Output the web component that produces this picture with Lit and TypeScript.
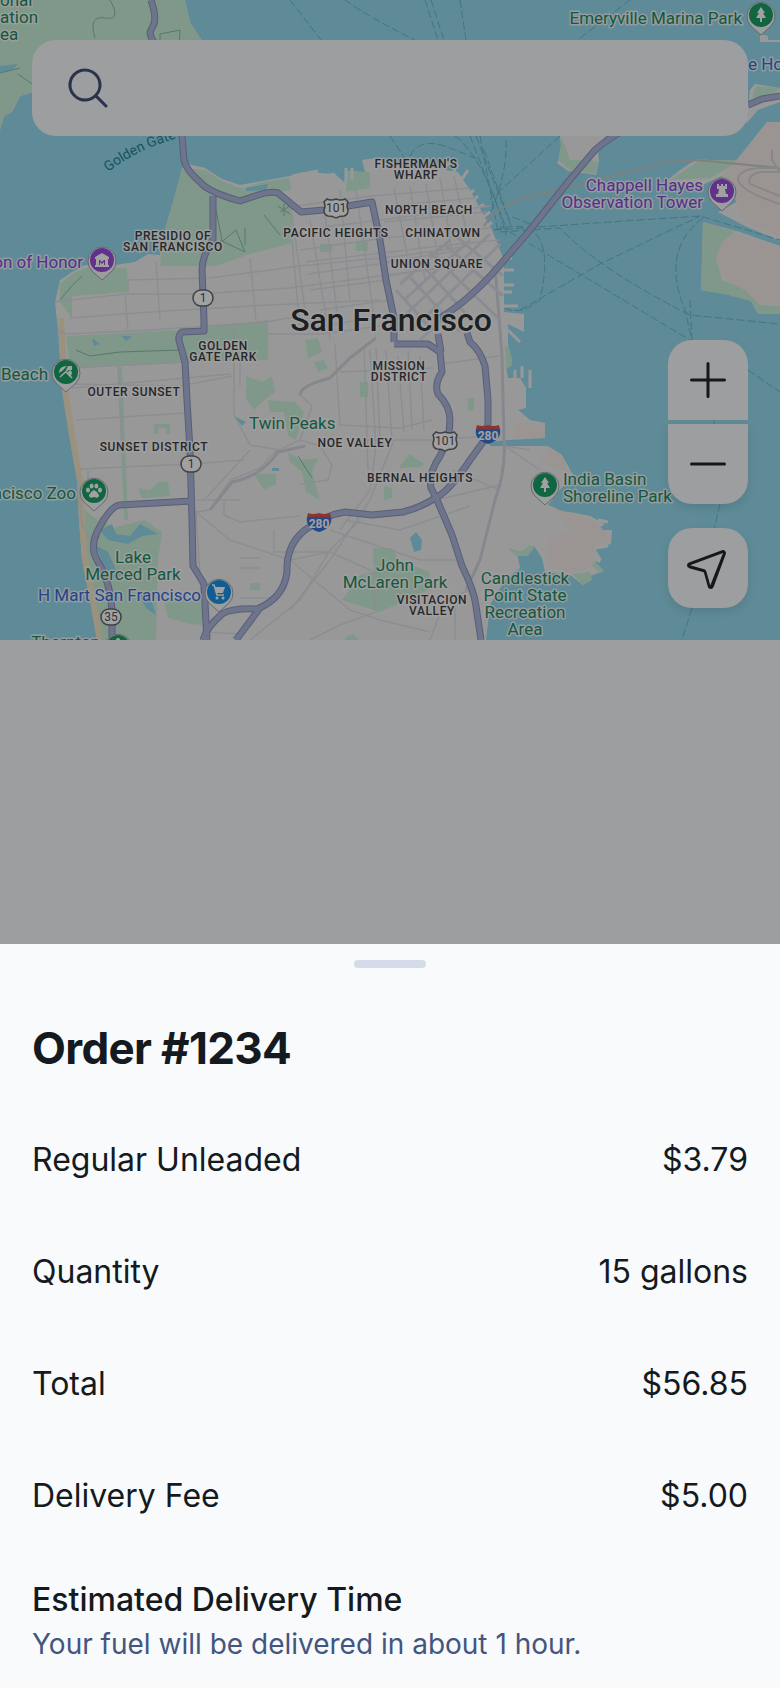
import { LitElement, html, svg, css } from "lit";
import { customElement, state } from "lit/decorators.js";

type Anchor = "start" | "middle" | "end";
type Label = { kind: string; x: number; y: number; anchor: Anchor; lines: string[] };
type PinIcon = "tree" | "tower" | "museum" | "umbrella" | "paw" | "cart" | "none";
type Pin = { x: number; y: number; tone: string; icon: PinIcon };

const LAND = [
  "M0 0H185L190 22L204 44L160 90L60 80L30 93L20 96L12 112L4 116L0 130Z",
  "M182 168L188 164L205 168L222 179L240 185L262 181L290 176L305 172L335 174L344 182L347 171L365 172L362 160L375 158L390 166L425 166L446 170L458 172L470 190L483 214L492 230L500 250L504 260V312L524 314V332L508 324L508 345L512 360L506 366L508 378L520 378L526 388V408L518 410L530 420L545 423V438L508 440L490 442L490 446L548 446L562 455L573 475L560 490L548 505L556 508L562 514L570 512L590 516L605 524L596 530L612 530L611 544L595 548L602 560L595 562L604 571L590 576L583 585L570 575L545 572L542 558L534 546L520 552L508 548L518 557L520 568L505 580L490 605L486 640H97L90 600L82 560L79 520L77 480L70 440L62 390L58 330L55 302L60 280L72 272L85 265L115 265L135 262L148 254L160 255L163 236L170 212L178 190Z",
  "M560 136L562 153L557 163L568 171L596 175L599 160L597 145L606 136Z",
  "M767 122H780V241L745 226L718 212L740 200L722 176L700 186L665 182L680 170L697 159L735 162Z",
  "M703 222L740 232L780 246V314H758L751 301L725 294L701 290Z",
  "M748 110L750 90L755 84L780 88V102L758 110L746 124Z",
  "M760 34L768 36V40H780V42H760Z",
];

const SHORE_TAN = [
  "M735 234Q718 240 717 256Q718 280 745 290L758 303H780V246Z",
  "M767 122H780V236L745 222L738 205L722 176L735 162Z",
  "M552 508L575 514L590 518L606 532L610 542L594 546L598 560L585 570L570 572L550 568L546 556L550 540L572 530Z",
  "M515 422L545 424V438L515 438Z",
  "M549 448L562 456L570 474L556 468L540 462Z",
];

const PARKS = [
  "M0 0H185L190 22L204 44L160 90L60 80L30 93L20 96L12 112L4 116L0 130Z",
  "M182 168L205 170L222 181L240 188L275 190L292 202V243L250 254L216 266H160L163 236L170 212Z",
  "M262 182L290 178L291 190L278 192L245 188Z",
  "M347 172L370 172L370 188L346 192Z",
  "M60 284L72 274L85 268L127 268L128 292L72 296V318L60 302Z",
  "M66 336L180 330L268 320L268 360L185 362L70 368Z",
  "M246 376L262 382L272 376L275 392L262 402L254 410L246 398Z",
  "M268 400L295 402L304 412L296 440L288 436L284 412L270 412Z",
  "M288 452L300 460L318 458L312 472L320 500L306 492L302 472L290 462Z",
  "M305 340L318 338L322 352L308 358Z",
  "M314 362L324 360L328 368L318 372Z",
  "M138 488L150 490L158 482H168L170 496L142 498Z",
  "M254 474L276 474L276 484L264 490Z",
  "M82 508L98 520L92 545L112 590L122 640H98L90 600L84 560Z",
  "M100 515L112 528L145 520L162 532L158 560L156 640H118L100 570L92 545Z",
  "M164 600L200 600L205 625L190 624L168 618Z",
  "M373 548L392 548L398 560L430 572L428 590L380 612L342 600L360 575L374 572Z",
  "M400 466L410 454L424 464L420 467L400 468Z",
  "M384 486L392 488V498L384 500Z",
  "M348 636L354 634L358 640H344Z",
  "M562 138L558 160L570 170L595 174L598 162L590 160L570 160Z",
  "M703 222L735 232L722 242L716 258L722 280L745 290L760 305L780 306V314H758L751 301L725 294L701 290Z",
  "M700 160L737 160L728 168L710 178L670 180Z",
  "M756 86L780 88L770 96L752 98Z",
  "M508 548L520 552L530 545L534 548L528 556L516 556Z",
  "M118 367H122L128 520H124Z",
  "M154 424H170V434H166V428H158V434H154Z",
  "M320 244H332V252H320Z",
  "M356 242H368V251H356Z",
  "M468 398H474V411H468Z",
  "M360 382H368V397H360Z",
  "M250 583H260V590H250Z",
  "M505 345L510 350L512 365L506 370Z",
  "M572 574L590 572L592 580L583 585Z",
  "M594 562L604 570L600 573L592 566Z",
];

const PONDS = [
  "M100 530L112 524L116 534L130 536L140 524L158 534L142 536L128 544L108 540Z",
  "M95 545L108 552L116 570L126 575L112 578L104 565Z",
  "M136 590L150 596L156 615L146 608Z",
  "M410 538L416 532L422 540L421 550L414 552Z",
  "M92 338L100 344L94 346Z",
  "M122 336L132 336L126 341Z",
  "M246 188L268 184L266 190L246 191Z",
  "M272 468H279V471H272Z",
  "M234 416L246 422L242 426Z",
  "M0 66L18 64L12 70L0 72Z",
];

const STREETS = [
  "M55 302L72 300L125 294L200 294L290 288L380 276L480 262",
  "M70 318L150 312L250 306L380 300",
  "M128 292V280L210 278L300 266L400 256L470 246",
  "M156 262L160 320 M125 294L128 330 M250 258L256 320 M292 240L300 330L360 320",
  "M340 190L350 300 M325 214L338 320 M310 220L330 340 M292 214L305 310 M356 190L376 330",
  "M296 206L372 196L470 188 M300 230L380 220L490 206 M300 250L384 238L490 228",
  "M306 262L440 246L500 240 M308 274L420 258 M310 290L386 280 M320 310L390 300",
  "M394 188L410 270 M410 186L425 280 M426 184L440 270 M440 178L452 250 M454 176L468 238",
  "M386 206L476 198 M384 222L486 212 M386 262L462 250 M388 276L450 266",
  "M58 330L66 334L150 330L266 322L300 316 M70 368L190 362L240 356",
  "M70 384L180 386L232 376 M72 388L230 374 M76 420L185 413 M80 469L190 464L244 460",
  "M118 367L122 450 M234 328V415L250 445 M240 350V386 M268 334L320 334L380 326",
  "M300 395L312 406L300 440L275 452L260 468L230 480L210 510",
  "M210 510L196 512L204 640 M196 500L240 500 M204 500L230 472L250 450",
  "M335 344L340 425L400 428L432 420 M364 345L368 470 M376 348L380 440",
  "M386 350L392 440 M398 356L404 432 M408 350L412 430 M420 356L424 430",
  "M340 372L434 368 M360 440L430 440L490 436",
  "M370 350L376 446L370 490L340 530 M394 440L370 500L330 560L290 610",
  "M440 364L500 356 M508 448L540 470 M504 446L530 450 M452 470L500 490 M436 500L500 485",
  "M345 520L400 530L470 506 M330 530L420 560L460 560",
  "M196 512L230 540L290 560L330 552L370 570L400 595",
  "M224 500L224 515L240 522L300 516 M274 530V552H330 M290 560L350 610L380 620L430 632",
  "M240 558H260 M240 568H260 M240 598H280 M207 632L240 634 M250 640L300 600L330 550L360 520",
  "M374 590L376 612L340 625L310 640 M430 640L445 600L470 590 M455 600V640",
  "M300 440L320 446L332 465L328 480L300 484 M250 445L280 450",
  "M78 480L82 525L94 545 M88 470V482",
];

const AVENUES = [
  "M495 266L502 356L504 440Q506 470 495 500L480 560L466 590",
  "M300 395Q300 386 330 378L350 358L376 338",
  "M210 510L232 482Q262 476 278 452L305 446",
];

const BAY_GRID = [
  "M412 330L500 244 M400 320L490 234 M420 340L503 262 M404 300L470 240 M400 284L450 240",
  "M430 252L500 320 M444 244L503 296 M420 262L480 330 M408 275L460 332 M456 236L503 276 M396 290L432 330",
];

const HIGHWAYS = [
  "M151 0Q158 20 152 28T160 48L182 136L184 160Q186 170 200 182Q208 192 240 201L258 195Q270 191 278 193L301 212L324 210L372 202L380 240L386 280L394 318V342",
  "M213 196L213 240Q202 256 202 270L204 320V331L182 332Q177 336 180 344L185 362L187 400L190 450L192 520L193 566L204 584L207 640",
  "M192 501L120 505Q110 506 97 532Q90 548 97 560Q110 580 112 610V640",
  "M203 640Q206 628 222 614Q232 608 257 609Q284 598 287 572Q286 545 305 530Q325 515 345 512L372 515L403 512Q420 508 437 497Q450 490 470 460L483 442L488 424L488 400L485 366Q480 350 470 342L467 333",
  "M236 640L245 628L260 608",
  "M394 344L428 344L440 352L442 372Q434 384 438 394Q450 406 450 420Q450 438 440 456Q428 474 431 488L437 500L452 535L462 566Q474 590 476 606L481 640",
  "M438 334L441 352",
  "M440 318Q470 300 500 265L530 230L568 182L595 150Q606 140 624 130",
  "M748 105L762 99L780 96",
];

const PATHS = [
  "M95 38Q88 15 105 18T110 0 M0 73L20 68 M18 74L32 84 M178 60L180 30L160 34V44",
  "M264 215L280 235 M245 228V245 M216 210L222 240 M212 250L236 230L245 252L220 240 M278 206L290 214 M280 212L290 206 M284 204V216",
  "M76 350L90 356L120 352L180 350 M60 300L70 288L82 276 M298 456L312 478",
];

const FERRIES = [
  "M290 0L325 45 M345 0Q370 18 415 40 M425 0L440 46 M431 0L446 46 M460 0L466 40 M630 0L575 42",
  "M390 136L406 160 M560 136L490 200 M506 140Q508 170 490 215 M410 156Q420 136 450 148L480 160",
  "M470 136L505 225 M476 136L512 228 M480 136L498 232 M455 136Q486 160 506 235 M484 150L510 222",
  "M494 230L610 222L700 216L780 240 M500 232L560 228Q600 270 690 315L780 324 M500 226L690 340",
  "M494 230Q560 210 540 300Q520 316 505 308 M520 310L600 264L700 216 M703 218Q660 250 685 310L692 340",
  "M748 370L780 392 M714 420V430 M720 504L714 530 M692 608L682 640 M690 300L692 340 M530 224L510 216",
];

const LABELS: Label[] = [
  { kind: "park", x: 0, y: 6, anchor: "start", lines: ["onal", "ation", "ea"] },
  { kind: "park", x: 742, y: 24, anchor: "end", lines: ["Emeryville Marina Park"] },
  { kind: "sight", x: 703, y: 191, anchor: "end", lines: ["Chappell Hayes", "Observation Tower"] },
  { kind: "sight", x: 83, y: 268, anchor: "end", lines: ["on of Honor"] },
  { kind: "park", x: 48, y: 380, anchor: "end", lines: ["Beach"] },
  { kind: "park", x: 76, y: 499, anchor: "end", lines: ["ncisco Zoo"] },
  { kind: "park", x: 249, y: 429, anchor: "start", lines: ["Twin Peaks"] },
  { kind: "park", x: 133, y: 563, anchor: "middle", lines: ["Lake", "Merced Park"] },
  { kind: "shop", x: 201, y: 601, anchor: "end", lines: ["H Mart San Francisco"] },
  { kind: "shop", x: 748, y: 70, anchor: "start", lines: ["e Ho"] },
  { kind: "park", x: 100, y: 648, anchor: "end", lines: ["Thornton"] },
  { kind: "park", x: 395, y: 571, anchor: "middle", lines: ["John", "McLaren Park"] },
  { kind: "park", x: 563, y: 485, anchor: "start", lines: ["India Basin", "Shoreline Park"] },
  { kind: "park", x: 525, y: 584, anchor: "middle", lines: ["Candlestick", "Point State", "Recreation", "Area"] },
  { kind: "district", x: 416, y: 168, anchor: "middle", lines: ["FISHERMAN'S", "WHARF"] },
  { kind: "district", x: 173, y: 240, anchor: "middle", lines: ["PRESIDIO OF", "SAN FRANCISCO"] },
  { kind: "district", x: 429, y: 214, anchor: "middle", lines: ["NORTH BEACH"] },
  { kind: "district", x: 443, y: 237, anchor: "middle", lines: ["CHINATOWN"] },
  { kind: "district", x: 437, y: 268, anchor: "middle", lines: ["UNION SQUARE"] },
  { kind: "district", x: 336, y: 237, anchor: "middle", lines: ["PACIFIC HEIGHTS"] },
  { kind: "district", x: 223, y: 350, anchor: "middle", lines: ["GOLDEN", "GATE PARK"] },
  { kind: "district", x: 134, y: 396, anchor: "middle", lines: ["OUTER SUNSET"] },
  { kind: "district", x: 154, y: 451, anchor: "middle", lines: ["SUNSET DISTRICT"] },
  { kind: "district", x: 399, y: 370, anchor: "middle", lines: ["MISSION", "DISTRICT"] },
  { kind: "district", x: 355, y: 447, anchor: "middle", lines: ["NOE VALLEY"] },
  { kind: "district", x: 420, y: 482, anchor: "middle", lines: ["BERNAL HEIGHTS"] },
  { kind: "district", x: 432, y: 604, anchor: "middle", lines: ["VISITACION", "VALLEY"] },
  { kind: "city", x: 391, y: 331, anchor: "middle", lines: ["San Francisco"] },
];

const LEADING: Record<string, number> = { park: 17, sight: 17, shop: 17, district: 11, city: 32 };

const PINS: Pin[] = [
  { x: 761, y: 15, tone: "green", icon: "tree" },
  { x: 722, y: 191, tone: "purple", icon: "tower" },
  { x: 102, y: 260, tone: "purple", icon: "museum" },
  { x: 66, y: 372, tone: "green", icon: "umbrella" },
  { x: 94, y: 491, tone: "green", icon: "paw" },
  { x: 545, y: 485, tone: "green", icon: "tree" },
  { x: 219, y: 592, tone: "blue", icon: "cart" },
  { x: 118, y: 647, tone: "green", icon: "none" },
];

const GLYPHS = {
  tree: svg`<path class="glyph" d="M0 -8L4 -2H2L5 3H1V7H-1V3H-5L-2 -2H-4Z"/>`,
  tower: svg`<path class="glyph" d="M-5 -7H-3V-5H-1V-7H1V-5H3V-7H5V-2H3L4 3H6V6H-6V3H-4L-3 -2H-5Z"/>`,
  museum: svg`<path class="glyph" fill-rule="evenodd" d="M0 -7L7 -3V-1H-7V-3ZM-6 -1H6V5H7V7H-7V5H-6ZM-3 5V0H-2L0 2L2 0H3V5H2V2L0 4L-2 2V5Z"/>`,
  umbrella: svg`<path class="glyph" d="M-7 1Q-7 -6 1 -6L-1 -4L-4 -1ZM2 -6H6V-2L0 -2ZM6 0Q6 3 4 5L1 1L4 -2Z"/><path class="glyph-line" d="M-6 5L5 -5M0 0L6 6"/>`,
  paw: svg`<g class="glyph"><ellipse cx="-6" cy="-1" rx="2" ry="2.5"/><ellipse cx="-2.4" cy="-5" rx="2" ry="2.6"/><ellipse cx="2.4" cy="-5" rx="2" ry="2.6"/><ellipse cx="6" cy="-1" rx="2" ry="2.5"/><path d="M0 -1Q3 0 5 4Q5 8 0 6Q-5 8 -5 4Q-3 0 0 -1Z"/></g>`,
  cart: svg`<path class="glyph" d="M-4 -5H6L4 1H-3Z"/><path class="glyph-line" d="M-7 -7H-5L-2 3H5"/><circle class="glyph" cx="-2" cy="6" r="1.5"/><circle class="glyph" cx="4" cy="6" r="1.5"/>`,
  none: svg`<circle class="glyph" cx="0" cy="-7" r="2"/>`,
};

@customElement("area-map")
class AreaMap extends LitElement {
  static styles = css`
    :host { display: block; }
    .canvas { display: block; width: 100%; height: 100%; font-family: Roboto, "Liberation Sans", sans-serif; }
    .water { fill: #90daee; }
    .land { fill: #f2f1f2; }
    .tan { fill: #f3ebe6; }
    .park { fill: #c6f0d8; }
    .sand { fill: none; stroke: #f5e6c4; stroke-width: 6; }
    .piers { fill: none; stroke: #f1f0f1; stroke-width: 3; }
    .street { fill: none; stroke: #dcdee5; stroke-width: 1.5; }
    .avenue { fill: none; stroke: #d0d4de; stroke-width: 3; }
    .grid { fill: none; stroke: #d9dce5; stroke-width: 3; }
    .trail { fill: none; stroke: #83bda3; stroke-width: 1; }
    .tunnel { fill: none; stroke: #c4ccc6; stroke-width: 2; }
    .taxiway { fill: none; stroke: #d8d4d3; stroke-width: 2; }
    .ferry { fill: none; stroke: #63b6cd; stroke-width: 1; stroke-dasharray: 8 3; }
    .casing { fill: none; stroke: #8490b8; stroke-width: 7; stroke-linejoin: round; }
    .highway { fill: none; stroke: #a9b5dc; stroke-width: 5; stroke-linejoin: round; }
    .label { paint-order: stroke; stroke: #ffffff; stroke-width: 3; stroke-opacity: 0.8; stroke-linejoin: round; font-size: 17px; }
    .park-text { fill: #14855a; }
    .sight-text { fill: #8440d8; }
    .shop-text { fill: #2c66d8; }
    .district-text { fill: #34353a; font-size: 12px; font-weight: 500; letter-spacing: 0.05em; }
    .city-text { fill: #26272a; font-size: 32px; font-weight: 500; }
    .strait-text { fill: #16808f; font-size: 14px; }
    .pin-back { fill: #f6f8fa; stroke: #9aa3a8; stroke-width: 1; }
    .green { fill: #0f9d62; }
    .purple { fill: #9445dc; }
    .blue { fill: #0f8ee6; }
    .glyph { fill: #ffffff; }
    .glyph-line { fill: none; stroke: #ffffff; stroke-width: 1.6; }
    .shield { fill: #ffffff; stroke: #5d6064; stroke-width: 1.5; }
    .shield-text { fill: #46484c; font-size: 12px; }
    .interstate { fill: #2f6fd2; }
    .interstate-top { fill: #dd4b43; }
    .interstate-text { fill: #ffffff; font-size: 12px; font-weight: 700; }
  `;

  private label(l: Label) {
    return svg`<text class="label ${l.kind}-text" text-anchor=${l.anchor}>${l.lines.map(
      (line, i) => svg`<tspan x=${l.x} y=${l.y + i * LEADING[l.kind]}>${line}</tspan>`,
    )}</text>`;
  }

  private pin(p: Pin) {
    return svg`<g transform="translate(${p.x} ${p.y})">
      <path class="pin-back" d="M0 20L-10 11A14 14 0 1 1 10 11Z"/>
      <circle class=${p.tone} r="12"/>${GLYPHS[p.icon]}</g>`;
  }

  private usRoute(x: number, y: number) {
    return svg`<g transform="translate(${x} ${y})">
      <path class="shield" d="M-9 -9Q-5 -7 0 -9Q5 -7 9 -9L12 -6Q10 -2 12 2Q12 7 8 8Q3 8 0 10Q-3 8 -8 8Q-12 7 -12 2Q-10 -2 -12 -6Z"/>
      <text class="shield-text" text-anchor="middle" y="4">101</text></g>`;
  }

  private stateRoute(x: number, y: number, name: string) {
    return svg`<g transform="translate(${x} ${y})">
      <rect class="shield" x="-10" y="-8" width="20" height="16" rx="8"/>
      <text class="shield-text" text-anchor="middle" y="4">${name}</text></g>`;
  }

  private interstate(x: number, y: number) {
    return svg`<g transform="translate(${x} ${y})">
      <path class="interstate" d="M-12 -5H12Q14 6 0 10Q-14 6 -12 -5Z"/>
      <path class="interstate-top" d="M-11 -9Q-6 -7 0 -9Q6 -7 11 -9L12 -5H-12Z"/>
      <text class="interstate-text" text-anchor="middle" y="6">280</text></g>`;
  }

  render() {
    const draw = (name: string, shapes: string[]) => shapes.map((d) => svg`<path class=${name} d=${d}/>`);
    return html`
      <svg class="canvas" viewBox="0 0 780 640" preserveAspectRatio="xMidYMid slice" role="img" aria-label="Map of San Francisco">
        <rect class="water" width="780" height="640"/>
        ${draw("land", LAND)}
        ${draw("tan", SHORE_TAN)}
        ${draw("park", PARKS)}
        <path class="sand" d="M61 318L65 390L73 440L80 480L82 520L85 560L93 600L100 640"/>
        <path class="piers" d="M440 172L450 162M450 178L458 164M460 182L468 170M462 200L474 190M466 206L478 196M470 214L484 204M476 222L490 212M482 230L492 222M500 258H512M500 270H514M500 285H514M500 292H512M500 306H518M508 318H524M508 330L520 342M515 380V370M522 378V366M530 388V370M598 520L608 522M595 548L608 546M590 552L600 562M292 176L318 171M300 182L335 174M346 180V168M352 180V168"/>
        ${draw("water", PONDS)}
        ${draw("street", STREETS)}
        ${draw("avenue", AVENUES)}
        ${draw("grid", BAY_GRID)}
        ${draw("trail", PATHS)}
        ${draw("ferry", FERRIES)}
        <path class="tunnel" d="M484 226Q500 200 550 192L620 174L665 162L697 160L780 168"/>
        <path class="taxiway" d="M780 168H758Q738 170 738 180Q742 192 780 204M780 172H760Q746 176 750 184L780 196M772 150V160L780 172"/>
        ${draw("casing", HIGHWAYS)}
        ${draw("highway", HIGHWAYS)}
        ${this.usRoute(336, 208)}${this.usRoute(445, 441)}
        ${this.stateRoute(203, 298, "1")}${this.stateRoute(191, 464, "1")}${this.stateRoute(111, 617, "35")}
        ${this.interstate(488, 434)}${this.interstate(319, 522)}
        <path id="strait" fill="none" d="M108 172Q142 146 186 136"/>
        <text class="strait-text"><textPath href="#strait">Golden Gate</textPath></text>
        ${PINS.map((p) => this.pin(p))}
        ${LABELS.map((l) => this.label(l))}
      </svg>
    `;
  }
}

@customElement("app-root")
class AppRoot extends LitElement {
  static styles = css`
    :host { display: block; font-family: Inter, "Liberation Sans", sans-serif; color: #141a20; }
    * { box-sizing: border-box; }
    .screen { position: relative; display: flex; flex-direction: column; min-height: 100vh; background: #f8fafc; }
    .map { position: relative; display: flex; flex-direction: column; justify-content: space-between; gap: 48px; min-height: 640px; padding: 40px 32px 32px; overflow: hidden; }
    .backdrop { position: absolute; inset: 0; }
    .search { position: relative; display: flex; align-items: center; gap: 16px; height: 96px; padding: 0 32px; border-radius: 24px; background: #f8fafc; color: #3b4870; }
    .search-input { flex: 1; min-width: 0; height: 100%; border: 0; outline: 0; background: transparent; font: inherit; font-size: 32px; color: inherit; }
    .controls { position: relative; display: flex; flex-direction: column; align-items: flex-end; gap: 24px; }
    .zoom { display: flex; flex-direction: column; gap: 4px; }
    .control { display: flex; align-items: center; justify-content: center; width: 80px; height: 80px; padding: 0; border: 0; border-radius: 24px; background: #f8fafc; color: #141a20; box-shadow: 0 4px 8px rgba(0, 0, 0, 0.1); }
    .zoom-in { border-radius: 24px 24px 0 0; box-shadow: none; }
    .zoom-out { border-radius: 0 0 24px 24px; }
    .icon { display: block; width: 48px; height: 48px; fill: currentColor; }
    .scrim { position: absolute; inset: 0; background: rgba(20, 20, 20, 0.4); }
    .sheet { position: relative; margin-top: auto; padding-top: 16px; background: #f8fafc; }
    .handle { width: 72px; height: 8px; margin: 0 auto; border-radius: 4px; background: #d5dbe8; }
    .title { margin: 52px 32px 28px; font-size: 44px; line-height: 56px; font-weight: 700; letter-spacing: -0.015em; }
    .rows { margin: 0; }
    .row { display: flex; align-items: center; justify-content: space-between; gap: 32px; min-height: 112px; padding: 0 32px; font-size: 32px; line-height: 48px; }
    .value { margin: 0; text-align: right; }
    .eta { padding: 24px 32px; }
    .eta-title { margin: 0; font-size: 32px; line-height: 48px; font-weight: 500; }
    .eta-text { margin: 0; font-size: 28px; line-height: 40px; color: #445580; }
  `;

  @state() private order = [
    { name: "Regular Unleaded", value: "$3.79" },
    { name: "Quantity", value: "15 gallons" },
    { name: "Total", value: "$56.85" },
    { name: "Delivery Fee", value: "$5.00" },
  ];

  render() {
    return html`
      <main class="screen">
        <section class="map" aria-label="Delivery area">
          <area-map class="backdrop"></area-map>
          <label class="search">
            <svg class="icon" viewBox="0 0 256 256" aria-hidden="true"><path d="M229.66,218.34l-50.07-50.06a88.11,88.11,0,1,0-11.31,11.31l50.06,50.07a8,8,0,0,0,11.32-11.32ZM40,112a72,72,0,1,1,72,72A72.08,72.08,0,0,1,40,112Z"/></svg>
            <input class="search-input" type="search" aria-label="Search" />
          </label>
          <div class="controls">
            <div class="zoom">
              <button class="control zoom-in" aria-label="Zoom in">
                <svg class="icon" viewBox="0 0 256 256"><path d="M224,128a8,8,0,0,1-8,8H136v80a8,8,0,0,1-16,0V136H40a8,8,0,0,1,0-16h80V40a8,8,0,0,1,16,0v80h80A8,8,0,0,1,224,128Z"/></svg>
              </button>
              <button class="control zoom-out" aria-label="Zoom out">
                <svg class="icon" viewBox="0 0 256 256"><path d="M224,128a8,8,0,0,1-8,8H40a8,8,0,0,1,0-16H216A8,8,0,0,1,224,128Z"/></svg>
              </button>
            </div>
            <button class="control" aria-label="My location">
              <svg class="icon" viewBox="0 0 256 256"><path transform="matrix(-1 0 0 1 256 0)" d="M229.33,98.21,53.41,33l-.16-.05A16,16,0,0,0,32.9,53.25a1,1,0,0,0,.05.16L98.21,229.33A15.77,15.77,0,0,0,113.28,240h.3a15.77,15.77,0,0,0,15-11.29l.06-.2,21.84-78,78-21.84.2-.06a16,16,0,0,0,.62-30.38ZM224,113.3l-76.06,21.3-.16.05a16,16,0,0,0-10.63,10.63l-.05.16-21.3,76.06-.06-.16L48,48l175.82,65.22Z"/></svg>
            </button>
          </div>
        </section>
        <div class="scrim"></div>
        <section class="sheet">
          <div class="handle"></div>
          <h1 class="title">Order #1234</h1>
          <dl class="rows">
            ${this.order.map((item) => html`<div class="row"><dt>${item.name}</dt><dd class="value">${item.value}</dd></div>`)}
          </dl>
          <div class="eta">
            <h2 class="eta-title">Estimated Delivery Time</h2>
            <p class="eta-text">Your fuel will be delivered in about 1 hour.</p>
          </div>
        </section>
      </main>
    `;
  }
}
